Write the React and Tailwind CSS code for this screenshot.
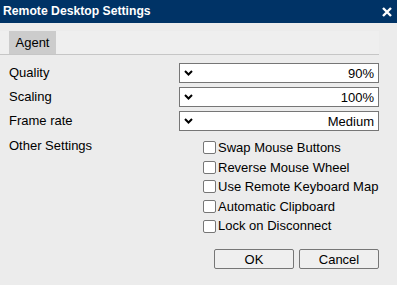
import React from "react";

const Chevron = () => (
  <svg width="9" height="6" viewBox="0 0 9 6" className="shrink-0">
    <path d="M1 1 L4.5 4.5 L8 1" fill="none" stroke="#000" strokeWidth="2" />
  </svg>
);

const SelectBox = ({ value }) => (
  <div className="w-[200px] h-[20px] bg-white border border-[#767676] flex items-center justify-between pl-[4px] pr-[4px]">
    <Chevron />
    <span className="text-[13px] leading-none text-[#000]">{value}</span>
  </div>
);

const Check = ({ label }) => (
  <label className="flex items-center h-[19.6px]">
    <span className="w-[13px] h-[13px] border border-[#767676] rounded-[2px] bg-white mr-[2px]" />
    <span className="text-[13px] text-[#000]">{label}</span>
  </label>
);

const rows = [
  { label: "Quality", value: "90%" },
  { label: "Scaling", value: "100%" },
  { label: "Frame rate", value: "Medium" },
];

const checks = [
  "Swap Mouse Buttons",
  "Reverse Mouse Wheel",
  "Use Remote Keyboard Map",
  "Automatic Clipboard",
  "Lock on Disconnect",
];

export default function App() {
  return (
    <div
      className="w-[397px] h-[285px] bg-[#ececec] overflow-hidden flex flex-col"
      style={{ fontFamily: '"Liberation Sans", Arial, sans-serif' }}
    >
      <div className="h-[23px] bg-[#003366] flex items-center justify-between pl-[3px] pr-[5px] shrink-0">
        <span className="text-white font-bold text-[12.2px]">Remote Desktop Settings</span>
        <svg width="10" height="10" viewBox="0 0 10 10">
          <path d="M1 1 L9 9 M9 1 L1 9" stroke="#fff" strokeWidth="2.4" />
        </svg>
      </div>

      <div className="mt-[8px] w-[379px] h-[24px] bg-[#efefef] border-b border-[#c6c6c6] pl-[9px] flex">
        <div className="w-[47px] bg-[#cccccc] flex items-center justify-center text-[13px] text-[#000]">
          Agent
        </div>
      </div>

      <div className="pl-[9px] w-[379px] mt-[8px] flex flex-col gap-[4px]">
        {rows.map((r) => (
          <div key={r.label} className="flex items-center justify-between">
            <span className="text-[13px] text-[#000]">{r.label}</span>
            <SelectBox value={r.value} />
          </div>
        ))}
      </div>

      <div className="pl-[9px] mt-[6px] flex">
        <span className="text-[13px] text-[#000] w-[194px] leading-[18px]">Other Settings</span>
        <div className="flex flex-col pt-[1px]">
          {checks.map((c) => (
            <Check key={c} label={c} />
          ))}
        </div>
      </div>

      <div className="w-[379px] flex justify-end gap-[5px] mt-[13px]">
        <button className="w-[80px] h-[20px] border border-[#767676] rounded-[2px] bg-[#efefef] text-[13px] text-[#000]">
          OK
        </button>
        <button className="w-[80px] h-[20px] border border-[#767676] rounded-[2px] bg-[#efefef] text-[13px] text-[#000]">
          Cancel
        </button>
      </div>
    </div>
  );
}
